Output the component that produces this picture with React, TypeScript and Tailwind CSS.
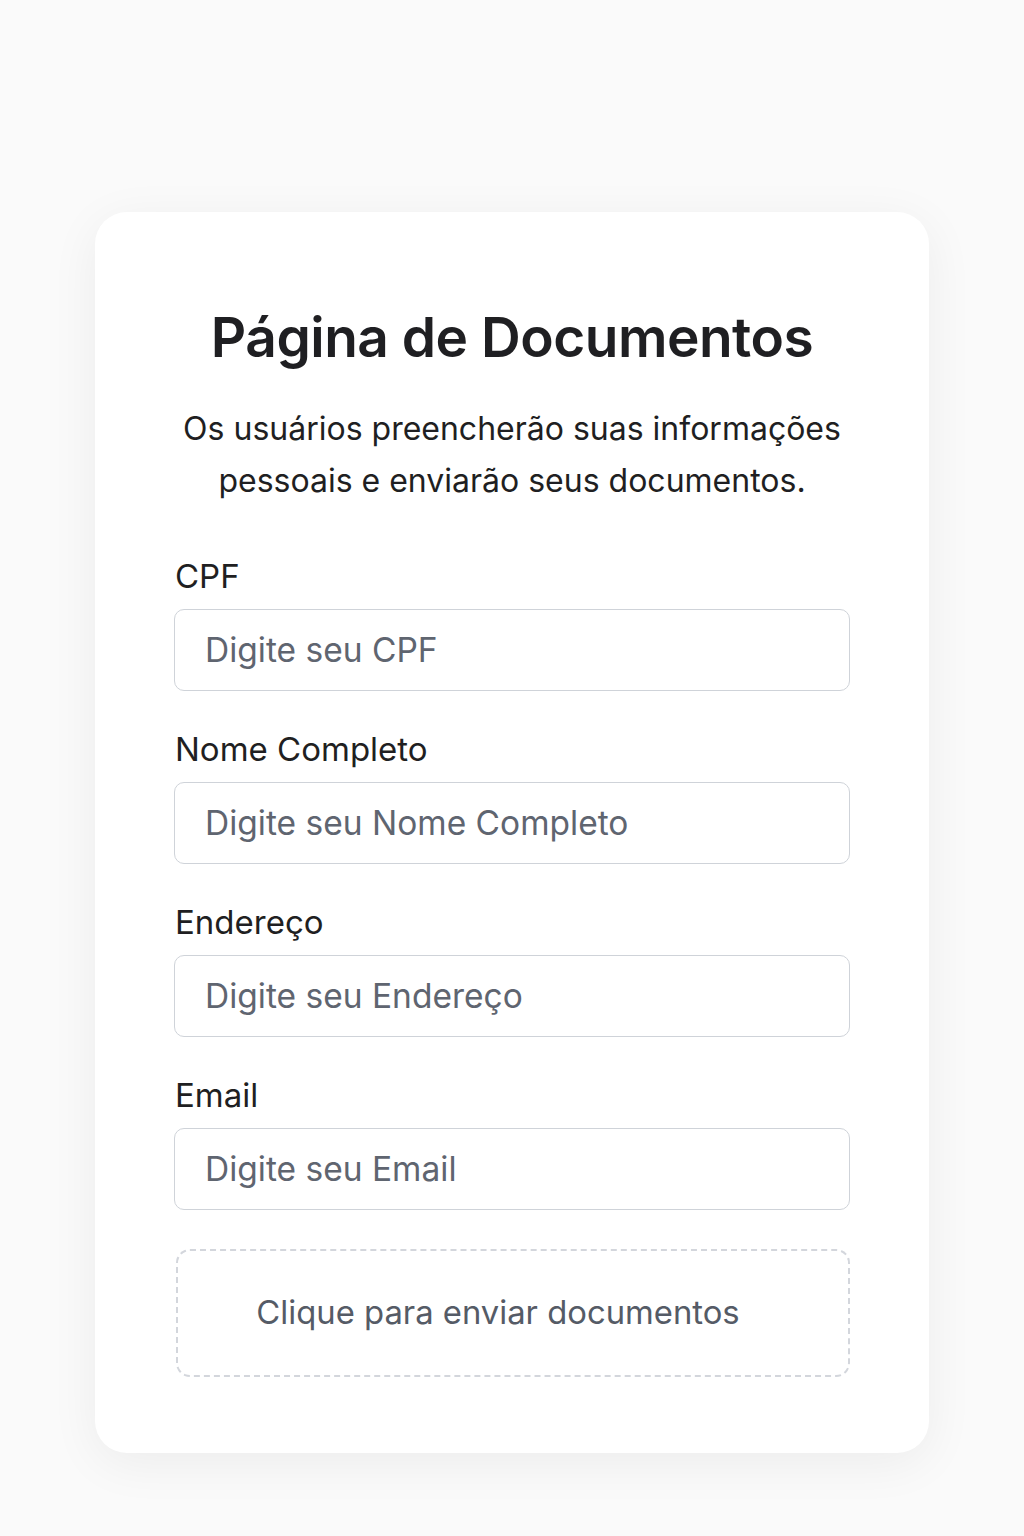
const fields = [
  { label: 'CPF', placeholder: 'Digite seu CPF' },
  { label: 'Nome Completo', placeholder: 'Digite seu Nome Completo' },
  { label: 'Endereço', placeholder: 'Digite seu Endereço' },
  { label: 'Email', placeholder: 'Digite seu Email' },
];

function Field({ label, placeholder }: { label: string; placeholder: string }) {
  return (
    <div className="flex flex-col">
      <label className="pl-[1px] text-[33px] leading-[36px] text-[#1f1f22]">{label}</label>
      <input
        type="text"
        placeholder={placeholder}
        className="mt-[15px] h-[82px] w-full rounded-[10px] border border-[#cfd3d9] bg-white px-[30px] text-[33.5px] text-[#1f1f22] outline-none placeholder:text-[#5f6570]"
      />
    </div>
  );
}

export default function App() {
  return (
    <div
      className="flex min-h-[1536px] w-full justify-center bg-[#fafafa] pt-[212px]"
      style={{ fontFamily: 'Inter, "Noto Sans", sans-serif' }}
    >
      <div className="flex h-[1241px] w-[834px] flex-col rounded-[32px] bg-white px-[79px] pt-[99px] shadow-[0_10px_50px_rgba(0,0,0,0.06)]">
        <h1 className="text-center text-[55px] font-semibold leading-[52px] tracking-[-0.5px] text-[#1f1f22]">
          Página de Documentos
        </h1>
        <p className="mt-[40px] text-center text-[32px] leading-[52px] text-[#1f1f22]">
          Os usuários preencherão suas informações
          <br />
          pessoais e enviarão seus documentos.
        </p>
        <div className="mt-[51px] flex flex-col gap-[40px]">
          {fields.map((f) => (
            <Field key={f.label} label={f.label} placeholder={f.placeholder} />
          ))}
        </div>
        <button
          type="button"
          className="mt-[39px] ml-[2px] flex h-[128px] items-center justify-center rounded-[14px] border-2 border-dashed border-[#d3d6dc] pr-[30px] text-[32.8px] text-[#555b66]"
        >
          Clique para enviar documentos
        </button>
      </div>
    </div>
  );
}
